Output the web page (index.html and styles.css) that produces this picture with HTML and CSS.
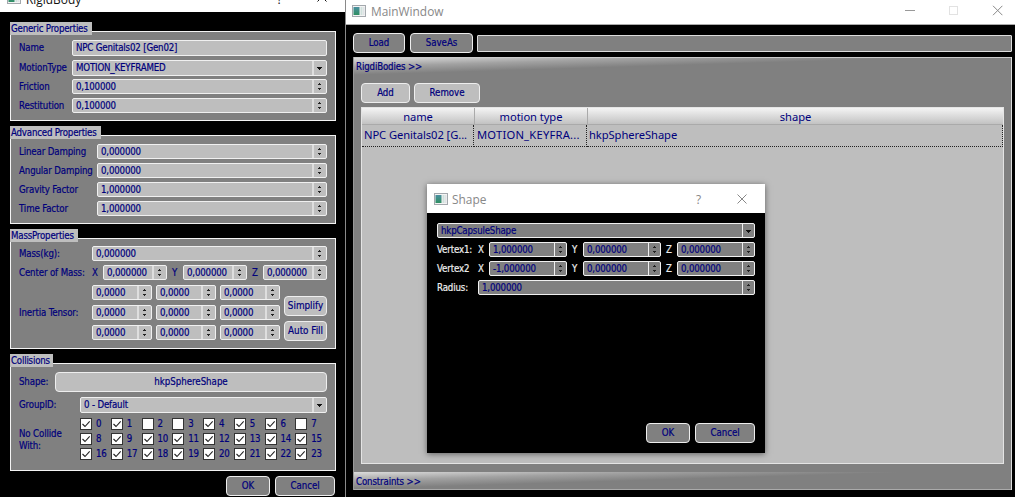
FILE: index.html
```html
<!DOCTYPE html>
<html lang="en">
<head>
<meta charset="utf-8">
<title>RigidBody editor</title>
<link rel="stylesheet" href="styles.css">
</head>
<body>
<svg class="defs" width="0" height="0">
  <defs>
    <linearGradient id="teal" x1="0" y1="0" x2="0" y2="1"><stop offset="0" stop-color="#4a8fa0"/><stop offset="1" stop-color="#2f8f62"/></linearGradient>
    <symbol id="appicon" viewBox="0 0 14 12">
      <rect x="0.5" y="0.5" width="13" height="11" fill="#f4f4f4" stroke="#a3a8ad"/>
      <rect x="1.5" y="2" width="6" height="8" fill="url(#teal)"/>
      <rect x="8.5" y="2" width="2" height="8" fill="#cfe0dc"/>
      <rect x="11" y="2" width="1.5" height="8" fill="#dfe3e6"/>
    </symbol>
  </defs>
</svg>
<main class="desktop">
  <section class="rb">
    <header class="rb-title">
      <svg class="icon" width="14" height="12"><use href="#appicon"/></svg>
      <span class="caption">RigidBody</span>
      <span class="help">?</span>
      <svg class="close" width="10" height="10" viewBox="0 0 10 10"><path d="M.5 .5l9 9M9.5 .5l-9 9"/></svg>
    </header>
    <div class="group g1">
      <span class="legend" style="width:82px">Generic Properties</span>
      <div class="row h16"><label>Name</label><div class="f">NPC Genitals02 [Gen02]</div></div>
      <div class="row h16"><label>MotionType</label><div class="f combo">MOTION_KEYFRAMED</div></div>
      <div class="row"><label>Friction</label><div class="f spin">0,100000</div></div>
      <div class="row"><label>Restitution</label><div class="f spin">0,100000</div></div>
    </div>
    <div class="group g2">
      <span class="legend" style="width:91px">Advanced Properties</span>
      <div class="row"><label>Linear Damping</label><div class="f spin">0,000000</div></div>
      <div class="row"><label>Angular Damping</label><div class="f spin">0,000000</div></div>
      <div class="row"><label>Gravity Factor</label><div class="f spin">1,000000</div></div>
      <div class="row"><label>Time Factor</label><div class="f spin">1,000000</div></div>
    </div>
    <div class="group g3">
      <span class="legend" style="width:68px">MassProperties</span>
      <div class="row"><label>Mass(kg):</label><div class="f spin">0,000000</div></div>
      <div class="row center"><label>Center of Mass:</label>
        <span>X</span><div class="f spin">0,000000</div>
        <span>Y</span><div class="f spin">0,000000</div>
        <span>Z</span><div class="f spin">0,000000</div></div>
      <div class="row tensor"><label>Inertia Tensor:</label>
        <div class="matrix">
          <div class="f spin">0,0000</div><div class="f spin">0,0000</div><div class="f spin">0,0000</div>
          <div class="f spin">0,0000</div><div class="f spin">0,0000</div><div class="f spin">0,0000</div>
          <div class="f spin">0,0000</div><div class="f spin">0,0000</div><div class="f spin">0,0000</div>
        </div>
        <div class="side"><div class="btn light">Simplify</div><div class="btn light">Auto Fill</div></div>
      </div>
    </div>
    <div class="group g4">
      <span class="legend" style="width:43px">Collisions</span>
      <div class="row shape"><label>Shape:</label><div class="btn light">hkpSphereShape</div></div>
      <div class="row gid"><label>GroupID:</label><div class="f combo">0 - Default</div></div>
      <div class="row collide"><label>No Collide<br>With:</label><div class="checks" id="checks"></div></div>
    </div>
    <footer class="rb-foot"><div class="btn ok">OK</div><div class="btn cancel">Cancel</div></footer>
  </section>

  <section class="mw">
    <header class="mw-title">
      <svg class="icon" width="14" height="12"><use href="#appicon"/></svg>
      <span class="caption">MainWindow</span>
      <svg class="ctl" width="98" height="11" viewBox="0 0 98 11"><path d="M0 5.5h10" stroke="#999"/><rect x="44.5" y="1.5" width="8" height="8" stroke="#e2e2e2"/><path d="M88 .8l9.4 9.4M97.4 .8l-9.4 9.4" stroke="#888"/></svg>
    </header>
    <div class="toolbar"><div class="btn load">Load</div><div class="btn save">SaveAs</div><div class="path"></div></div>
    <div class="toolbox">
      <div class="tab">RigdiBodies &gt;&gt;</div>
      <div class="page">
        <div class="actions"><div class="btn light add">Add</div><div class="btn light rem">Remove</div></div>
        <div class="table">
          <div class="tr th"><span>name</span><span>motion type</span><span>shape</span></div>
          <div class="tr td"><span class="t1">NPC Genitals02 [G...</span><span class="t2">MOTION_KEYFRA...</span><span class="t3">hkpSphereShape</span></div>
        </div>
      </div>
      <div class="tab last">Constraints &gt;&gt;</div>
    </div>
  </section>

  <section class="dlg">
    <header class="dlg-title">
      <svg class="icon" width="14" height="12"><use href="#appicon"/></svg>
      <span class="caption">Shape</span>
      <span class="help">?</span>
      <svg class="close" width="10" height="10" viewBox="0 0 10 10"><path d="M.5 .5l9 9M9.5 .5l-9 9"/></svg>
    </header>
    <div class="dlg-body">
      <div class="f combo">hkpCapsuleShape</div>
      <div class="vec"><label>Vertex1:</label><span>X</span><div class="f spin">1,000000</div><span>Y</span><div class="f spin">0,000000</div><span>Z</span><div class="f spin">0,000000</div></div>
      <div class="vec"><label>Vertex2</label><span>X</span><div class="f spin">-1,000000</div><span>Y</span><div class="f spin">0,000000</div><span>Z</span><div class="f spin">0,000000</div></div>
      <div class="vec radius"><label>Radius:</label><div class="f spin">1,000000</div></div>
    </div>
    <footer class="dlg-foot"><div class="btn ok">OK</div><div class="btn cancel">Cancel</div></footer>
  </section>
</main>
<script src="app.js"></script>
</body>
</html>
```
FILE: styles.css
```css
* { box-sizing: border-box; }
body { margin: 0; background: #000; }
.defs { position: absolute; }
.desktop {
  position: relative; width: 1015px; height: 497px; overflow: hidden;
  display: flex; background: #000; color: #00007c;
  font: 9.6px/12px "DejaVu Sans Condensed", "DejaVu Sans", sans-serif;
  font-stretch: condensed; letter-spacing: -0.12px; white-space: nowrap;
  -webkit-text-stroke: 0.2px currentColor;
}
.caption, .help { font-family: "Open Sans", "Noto Sans", sans-serif; font-stretch: normal; letter-spacing: 0; font-size: 11.9px; line-height: 16px; -webkit-text-stroke: 0; }
.icon { flex: none; }
.close { fill: none; stroke: #888; flex: none; }

/* shared controls */
.f {
  height: 15px; border: 1px solid #f0f0f0; border-radius: 2px; background: #bebebe;
  display: flex; align-items: center; padding-left: 3px; overflow: hidden; min-width: 0; letter-spacing: -0.16px;
}
.f::after { content: ""; width: 12px; height: 100%; margin-left: auto; flex: none; }
.spin::after {
  border-left: 2px solid #dedede;
  background:
    linear-gradient(#222, #222) 5px 3px / 1px 1px no-repeat,
    linear-gradient(#222, #222) 4px 4px / 3px 1px no-repeat,
    linear-gradient(#222, #222) 4px 8px / 3px 1px no-repeat,
    linear-gradient(#222, #222) 5px 9px / 1px 1px no-repeat;
}
.combo::after {
  border-left: 2px solid #dedede;
  background:
    linear-gradient(#111, #111) 3px 6px / 5px 1px no-repeat,
    linear-gradient(#111, #111) 4px 7px / 3px 1px no-repeat,
    linear-gradient(#111, #111) 5px 8px / 1px 1px no-repeat;
}
.btn {
  height: 20px; border: 1px solid #eee; border-radius: 4px; background: #808080;
  display: flex; align-items: center; justify-content: center; flex: none; letter-spacing: 0;
}
.btn.light { background: #bebebe; }

/* rigid body window */
.rb { width: 346px; height: 497px; border-right: 1px solid #8a8a8a; display: flex; flex-direction: column; flex: none; }
.rb-title { height: 12px; background: #fff; display: flex; align-items: flex-end; padding-left: 7px; overflow: hidden; color: #111; margin-bottom: 19px; }
.rb-title .icon { margin-bottom: 8px; }
.rb-title .caption { margin-left: 5px; margin-bottom: 5px; width: 251px; }
.rb-title .help { margin-bottom: 5px; width: 40px; }
.rb-title .close { stroke: #111; margin-bottom: 10px; }
.group { position: relative; margin-left: 10px; width: 326px; border: 1px solid #f4f4f4; background: #808080; padding-left: 8px; flex: none; }
.legend { position: absolute; left: -1px; top: -10px; height: 13px; background: #bebebe; line-height: 13px; padding-left: 1px; letter-spacing: -0.18px; }
.g1 { height: 90px; padding-top: 8px; margin-bottom: 14px; }
.g2 { height: 89px; padding-top: 8px; margin-bottom: 14px; }
.g3 { height: 111px; padding-top: 8px; margin-bottom: 14px; }
.g4 { height: 108px; padding-top: 8px; margin-bottom: 5px; }
.row { display: flex; align-items: center; height: 15px; margin-bottom: 4px; }
.row label { flex: none; }
.row .f { flex: 1; }
.h16 { margin-bottom: 4px; height: 16px; }
.h16 .f { height: 16px; }
.g1 .h16 + .row:not(.h16) { margin-top: -1px; }
.g1 .row { width: 308px; } .g1 label { width: 53px; }
.g2 .row { width: 308px; } .g2 label { width: 78px; }
.g3 .row { width: 308px; } .g3 label { width: 73px; }
.g3 { padding-top: 7px; }
.center span { width: 11px; flex: none; }
.center .f + span { margin-left: 5px; }
.g3 .tensor { height: 55px; margin-top: 5px; }
.matrix { display: grid; grid-template-columns: repeat(3, 60px); gap: 5px 4px; width: 188px; flex: none; }
.side { display: flex; flex-direction: column; gap: 5px; margin: 11px 0 0 4px; width: 43px; flex: none; }
.side .btn { font-size: 9.8px; }
.g4 .row { width: 308px; }
.shape label { width: 36px; }
.g4 .shape { height: 20px; margin-bottom: 5px; }
.shape .btn { flex: 1; }
.gid label, .collide label { width: 61px; }
.g4 .gid { height: 16px; }
.gid .f { height: 16px; }
.g4 .collide { height: 45px; }
.collide label { line-height: 12px; }
.checks { display: grid; grid-template-columns: repeat(8, 30.75px); grid-auto-rows: 15px; align-self: flex-start; margin-top: -1px; }
.check { display: flex; align-items: center; gap: 4px; }
.check svg { background: #fff; border: 1px solid #333; flex: none; }
.rb-foot { display: flex; justify-content: flex-end; gap: 5px; padding-right: 10px; }
.ok { width: 44px; } .cancel { width: 60px; }

/* main window */
.mw { width: 669px; display: flex; flex-direction: column; }
.mw-title { height: 25px; background: #fff; border-bottom: 1px solid #aaa; display: flex; align-items: center; padding: 0 12px 3px 6px; color: #888; }
.mw-title .caption { margin-left: 5px; padding-top: 1px; }
.ctl { margin-left: auto; fill: none; }
.toolbar { display: flex; padding: 8px 3px 4px 7px; align-items: center; height: 32px; }
.load { width: 52px; margin-right: 5px; } .save { width: 63px; margin-right: 4px; }
.path { flex: 1; height: 17px; background: #808080; border: 1px solid #ddd; border-radius: 1px; }
.toolbox { margin-left: 7px; width: 659px; height: 433px; background: #808080; border-left: 1px solid #999; border-right: 1px solid #ddd; display: flex; flex-direction: column; }
.tab { height: 18px; padding-left: 2px; line-height: 17px; border-top: 1px solid #ccc; background: linear-gradient(178.26deg, #dcdcdc 0, #a2a2a2 9px, #808080 17px); }
.tab.last { border-top: 0; border-bottom: 1px solid #aaa; line-height: 19px; }
.page { height: 397px; padding: 8px 7px 8px 7px; display: flex; flex-direction: column; }
.actions { display: flex; gap: 4px; margin-bottom: 4px; }
.add { width: 49px; } .rem { width: 66px; }
.table { flex: 1; background: #bebebe; border: 1px solid #e4e4e4; font-family: "Noto Sans", sans-serif; font-stretch: normal; font-size: 11.2px; letter-spacing: -0.08px; -webkit-text-stroke: 0; }
.tr { display: grid; grid-template-columns: 112px 113px 1fr; }
.th { height: 17px; line-height: 17px; text-align: center; background: linear-gradient(#f4f4f4, #c2c2c2); border-bottom: 1px solid #aaa; }
.th span + span { border-left: 1px solid #aaa; }
.td { height: 22px; line-height: 20px; }
.td span { padding-left: 2px; border-right: 1px dotted #222; border-bottom: 1px dotted #222; }
.td .t2 { padding-left: 3px; letter-spacing: 0.22px; }

/* floating shape dialog */
.dlg { position: absolute; left: 427px; top: 184px; width: 338px; height: 269px; background: #000; box-shadow: 0 1px 6px rgba(0,0,0,.5); display: flex; flex-direction: column; }
.dlg-title { height: 29px; background: #fff; display: flex; align-items: center; padding-left: 7px; color: #888; }
.dlg-title .caption { margin-left: 4px; width: 244px; padding-top: 1px; }
.dlg-title .help { width: 41px; }
.dlg-body { padding: 10px 10px 0; color: #eee; flex: 1; display: flex; flex-direction: column; gap: 4px; }
.dlg-body .f { background: #808080; color: #00007c; }
.dlg-body .f::after { border-left: 1px solid #eee; width: 11px; }
.dlg-body > .f { height: 15px; }
.vec { display: flex; align-items: center; height: 15px; }
.vec label { width: 41px; flex: none; }
.vec span { width: 11px; flex: none; }
.vec .f { flex: 1; }
.vec .f + span { margin-left: 5px; }
.dlg-foot { display: flex; justify-content: flex-end; gap: 5px; padding: 0 10px 10px; }
```
FILE: app.js
```js
// Collision layers that are left unticked
const off = new Set([2, 3, 7]);
document.getElementById('checks').innerHTML = Array.from({ length: 24 }, (_, i) =>
  `<div class="check"><svg width="12" height="12" viewBox="0 0 10 10">${
    off.has(i) ? '' : '<path d="M1.5 5l2.5 2.5L8.7 2.3" fill="none" stroke="#222" stroke-width="1.1"/>'
  }</svg><span>${i}</span></div>`).join('');
```
